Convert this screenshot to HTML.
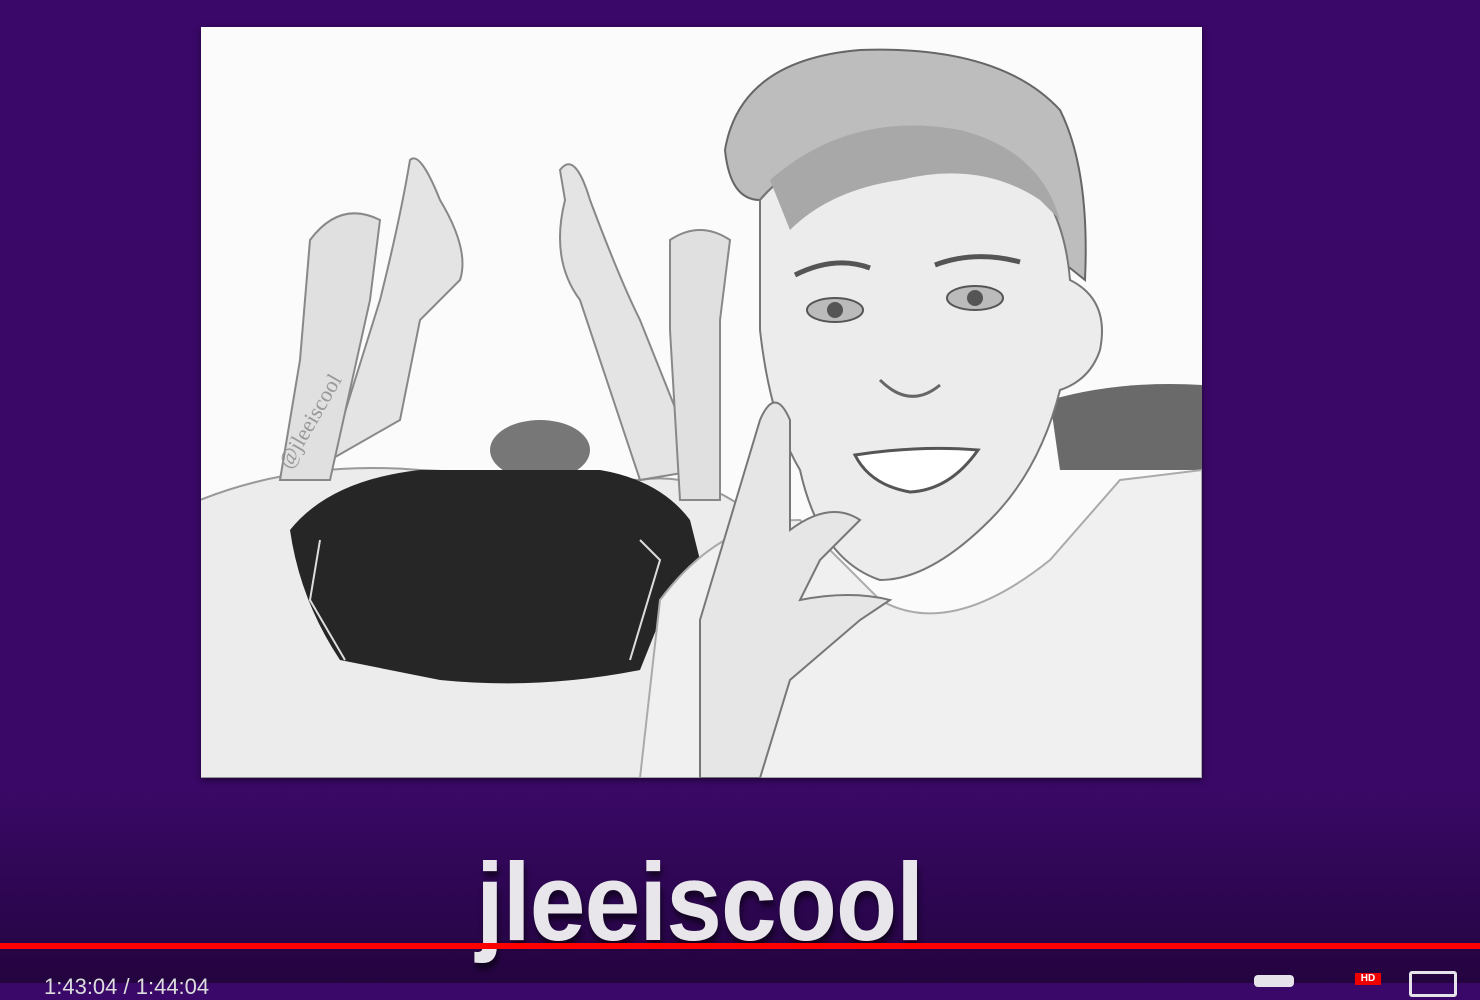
<!DOCTYPE html>
<html><head><style>
html,body{margin:0;padding:0;}
body{width:1480px;height:983px;overflow:hidden;position:relative;background:linear-gradient(#3a0868 0%,#3a0866 80%,#2c0650 92%,#24043f 100%);font-family:"Liberation Sans",sans-serif;}
#art{position:absolute;left:201px;top:27px;width:1001px;height:751px;background:#fbfbfb;box-shadow:0 2px 6px rgba(0,0,0,.5);overflow:hidden;}
#title{position:absolute;left:476px;top:848px;font-size:110px;font-weight:bold;letter-spacing:-1px;color:#e8e6ea;text-shadow:2px 6px 6px rgba(0,0,0,.55);line-height:1;transform:scaleX(0.91);transform-origin:left;}
#bar{position:absolute;left:0;top:943px;width:1480px;height:6px;background:#f00;}
#time{position:absolute;left:44px;top:974px;color:#ddd;font-size:22px;}
</style></head><body>
<div id="art">
<svg width="1001" height="751" viewBox="201 27 1001 751">
<g fill="none" stroke="#999" stroke-width="2">
<path d="M200 500 Q300 460 420 470 L640 480 Q700 470 760 520 L760 778 L200 778Z" fill="#ececec"/>
</g>
<path d="M330 460 L380 300 Q400 220 410 160 Q420 150 440 200 Q470 250 460 280 L420 320 L400 420 Z" fill="#e4e4e4" stroke="#888" stroke-width="2"/>
<path d="M560 170 Q575 150 590 200 Q620 280 640 320 L700 470 L640 480 L580 300 Q550 260 565 200Z" fill="#e4e4e4" stroke="#888" stroke-width="2"/>
<path d="M310 240 Q340 200 380 220 L370 300 L330 480 L280 480 L300 360Z" fill="#e0e0e0" stroke="#888" stroke-width="2"/>
<path d="M670 240 Q700 220 730 240 L720 320 L720 500 L680 500 L670 330Z" fill="#e0e0e0" stroke="#888" stroke-width="2"/>
<ellipse cx="540" cy="450" rx="50" ry="30" fill="#777"/>
<path d="M290 530 Q330 480 420 470 L600 470 Q660 480 690 520 L700 560 L660 620 L640 670 Q540 690 440 680 L340 660 Q300 600 290 530Z" fill="#262626"/>
<path d="M320 540 L310 600 L345 660" stroke="#ddd" stroke-width="2" fill="none"/>
<path d="M640 540 L660 560 L630 660" stroke="#ddd" stroke-width="2" fill="none"/>
<path d="M1050 400 Q1120 380 1202 385 L1202 470 L1060 470Z" fill="#6a6a6a"/>
<path d="M640 778 L660 600 Q720 520 800 520 L880 600 Q950 640 1050 560 L1120 480 L1202 470 L1202 778Z" fill="#f0f0f0" stroke="#aaa" stroke-width="2"/>
<path d="M725 150 Q740 60 860 50 Q1000 45 1060 110 Q1090 170 1085 280 L1060 260 Q1040 160 900 150 Q800 150 760 200 Q730 200 725 150Z" fill="#bdbdbd" stroke="#666" stroke-width="2"/>
<path d="M760 200 Q830 120 960 140 Q1060 160 1070 280 Q1110 300 1100 350 Q1090 380 1060 390 Q1040 470 990 520 Q930 580 880 580 Q820 560 800 470 Q770 420 760 330Z" fill="#ececec" stroke="#777" stroke-width="2"/>
<path d="M770 180 Q850 110 960 130 Q1040 150 1060 220 L1040 200 Q980 160 900 180 Q830 190 790 230Z" fill="#a8a8a8"/>
<ellipse cx="835" cy="310" rx="28" ry="12" fill="#bbb" stroke="#555" stroke-width="2"/>
<circle cx="835" cy="310" r="8" fill="#555"/>
<ellipse cx="975" cy="298" rx="28" ry="12" fill="#bbb" stroke="#555" stroke-width="2"/>
<circle cx="975" cy="298" r="8" fill="#555"/>
<path d="M795 275 Q835 255 870 268 M935 265 Q975 250 1020 262" stroke="#555" stroke-width="5" fill="none"/>
<path d="M880 380 Q910 410 940 385" stroke="#666" stroke-width="3" fill="none"/>
<path d="M855 455 Q920 445 978 450 Q950 490 910 492 Q870 485 855 455Z" fill="#fff" stroke="#555" stroke-width="3"/>
<path d="M700 778 L700 620 Q730 520 760 420 Q775 385 790 420 L790 530 Q830 500 860 520 L820 560 L800 600 Q850 590 890 600 L860 620 L790 680 L760 778Z" fill="#e6e6e6" stroke="#777" stroke-width="2"/>
<text x="290" y="470" transform="rotate(-60 290 470)" font-size="22" fill="#999" font-family="Liberation Serif">@jleeiscool</text>
</svg>
</div>
<div id="title">jleeiscool</div>
<div id="bar"></div>
<div id="time">1:43:04 / 1:44:04</div>
<div style="position:absolute;left:1254px;top:975px;width:40px;height:12px;background:#e6e4ea;border-radius:4px;"></div>
<div style="position:absolute;left:1355px;top:973px;width:26px;height:12px;background:#e00;color:#fff;font-size:10px;font-weight:bold;text-align:center;">HD</div>
<div style="position:absolute;left:1409px;top:971px;width:42px;height:20px;border:3px solid #e6e4ea;border-radius:3px;"></div>
</body></html>
